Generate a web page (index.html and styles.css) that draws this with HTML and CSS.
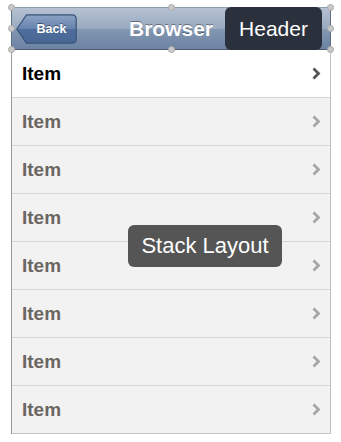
FILE: index.html
```html
<!DOCTYPE html>
<html>
<head>
<meta charset="utf-8">
<link rel="stylesheet" href="styles.css">
</head>
<body>
<div class="canvas">
  <div class="window">
    <header class="navbar">
      <div class="nav-left">
        <button class="back">
          <svg class="back-shape" width="61" height="30" viewBox="0 0 61 30">
            <defs>
              <linearGradient id="bg" x1="0" y1="0" x2="0" y2="1">
                <stop offset="0" stop-color="#8da3c4"/>
                <stop offset="0.5" stop-color="#6682ad"/>
                <stop offset="0.5" stop-color="#4f6d9c"/>
                <stop offset="1" stop-color="#4a6896"/>
              </linearGradient>
            </defs>
            <path d="M0.8 15 L10.5 0.8 H56 Q60.2 0.8 60.2 5 V25 Q60.2 29.2 56 29.2 H10.5 Z" fill="url(#bg)" stroke="#3a537a" stroke-width="1.2"/>
          </svg>
          <span class="back-label">Back</span>
        </button>
      </div>
      <h1 class="title">Browser</h1>
      <div class="nav-right"></div>
      <span class="handle h-tl"></span>
      <span class="handle h-ml"></span>
      <span class="handle h-bl"></span>
      <span class="handle h-tc"></span>
      <span class="handle h-bc"></span>
      <span class="handle h-tr"></span>
      <span class="handle h-mr"></span>
      <span class="handle h-br"></span>
      <div class="tip tip-header">Header</div>
    </header>
    <ul class="list">
      <li class="row active"><span class="label">Item</span><svg class="chev" width="9" height="13" viewBox="0 0 9 13"><path d="M1.5 1.5 L6.5 6.5 L1.5 11.5" fill="none" stroke="currentColor" stroke-width="2.8"/></svg></li>
      <li class="row"><span class="label">Item</span><svg class="chev" width="9" height="13" viewBox="0 0 9 13"><path d="M1.5 1.5 L6.5 6.5 L1.5 11.5" fill="none" stroke="currentColor" stroke-width="2.8"/></svg></li>
      <li class="row"><span class="label">Item</span><svg class="chev" width="9" height="13" viewBox="0 0 9 13"><path d="M1.5 1.5 L6.5 6.5 L1.5 11.5" fill="none" stroke="currentColor" stroke-width="2.8"/></svg></li>
      <li class="row"><span class="label">Item</span><svg class="chev" width="9" height="13" viewBox="0 0 9 13"><path d="M1.5 1.5 L6.5 6.5 L1.5 11.5" fill="none" stroke="currentColor" stroke-width="2.8"/></svg></li>
      <li class="row"><span class="label">Item</span><svg class="chev" width="9" height="13" viewBox="0 0 9 13"><path d="M1.5 1.5 L6.5 6.5 L1.5 11.5" fill="none" stroke="currentColor" stroke-width="2.8"/></svg></li>
      <li class="row"><span class="label">Item</span><svg class="chev" width="9" height="13" viewBox="0 0 9 13"><path d="M1.5 1.5 L6.5 6.5 L1.5 11.5" fill="none" stroke="currentColor" stroke-width="2.8"/></svg></li>
      <li class="row"><span class="label">Item</span><svg class="chev" width="9" height="13" viewBox="0 0 9 13"><path d="M1.5 1.5 L6.5 6.5 L1.5 11.5" fill="none" stroke="currentColor" stroke-width="2.8"/></svg></li>
      <li class="row"><span class="label">Item</span><svg class="chev" width="9" height="13" viewBox="0 0 9 13"><path d="M1.5 1.5 L6.5 6.5 L1.5 11.5" fill="none" stroke="currentColor" stroke-width="2.8"/></svg></li>
    </ul>
    <div class="tip tip-stack">Stack Layout</div>
  </div>
</div>
</body>
</html>
```

FILE: styles.css
```css
* { box-sizing: border-box; }
html, body { margin: 0; padding: 0; background: #ffffff; }
body { font-family: "Liberation Sans", Arial, sans-serif; }

.canvas { padding: 7px 0 0 11px; }

.window {
  position: relative;
  width: 320px;
}

.navbar {
  position: relative;
  height: 43px;
  display: grid;
  grid-template-columns: 1fr auto 1fr;
  align-items: center;
  background: linear-gradient(to bottom, #b6c2d2 0%, #98a9c0 50%, #8397b2 51%, #6c83a2 100%);
  border-top: 1px solid #8f9cae;
  border-bottom: 1px solid #4b5a70;
  border-left: 1px solid #5f6f86;
  border-right: 1px solid #5f6f86;
}

.nav-left { justify-self: start; padding-left: 4px; display: flex; }

.back {
  position: relative;
  width: 61px;
  height: 30px;
  padding: 0 0 0 10px;
  margin: 0;
  border: 0;
  background: transparent;
  display: flex;
  align-items: center;
  justify-content: center;
}
.back-shape { position: absolute; left: 0; top: 0; }
.back-label {
  position: relative;
  color: #ffffff;
  font-weight: bold;
  font-size: 12.5px;
  text-shadow: 0 -1px 0 rgba(0,0,0,0.45);
}

.title {
  margin: 0;
  color: #ffffff;
  font-size: 21px;
  font-weight: bold;
  text-shadow: 0 -1px 0 rgba(0,0,0,0.4);
  line-height: 1;
}

.handle {
  position: absolute;
  width: 7px;
  height: 7px;
  border-radius: 50%;
  background: #c9c9c9;
  border: 1px solid #a9a9a9;
}
.h-tl { left: -4px; top: -4px; }
.h-ml { left: -4px; top: 17px; }
.h-bl { left: -4px; bottom: -4px; }
.h-tc { left: 156px; top: -4px; }
.h-bc { left: 156px; bottom: -4px; }
.h-tr { right: -4px; top: -4px; }
.h-mr { right: -4px; top: 17px; }
.h-br { right: -4px; bottom: -4px; }

.tip {
  position: absolute;
  color: #ffffff;
  font-size: 21px;
  display: flex;
  align-items: center;
  justify-content: center;
  border-radius: 6px;
}
.tip-header {
  left: 213px;
  top: -1px;
  width: 97px;
  height: 43px;
  background: #2b313c;
}
.tip-stack {
  left: 117px;
  top: 218px;
  width: 154px;
  height: 42px;
  font-size: 22px;
  background: #555555;
}

.list {
  list-style: none;
  margin: 0;
  padding: 0;
  border-left: 1px solid #9a9a9a;
  border-right: 1px solid #c0c0c0;
}

.row {
  height: 48px;
  display: flex;
  align-items: center;
  justify-content: space-between;
  padding: 0 9px 0 10px;
  background: #f2f2f2;
  border-bottom: 1px solid #d6d6d6;
  color: #6b6662;
}
.row:last-child { border-bottom-color: #c4c4c4; }
.row.active { background: #ffffff; color: #000000; }

.label { font-size: 19px; font-weight: bold; }

.chev { color: #a6a6a6; display: block; }
.row.active .chev { color: #555555; }
```
